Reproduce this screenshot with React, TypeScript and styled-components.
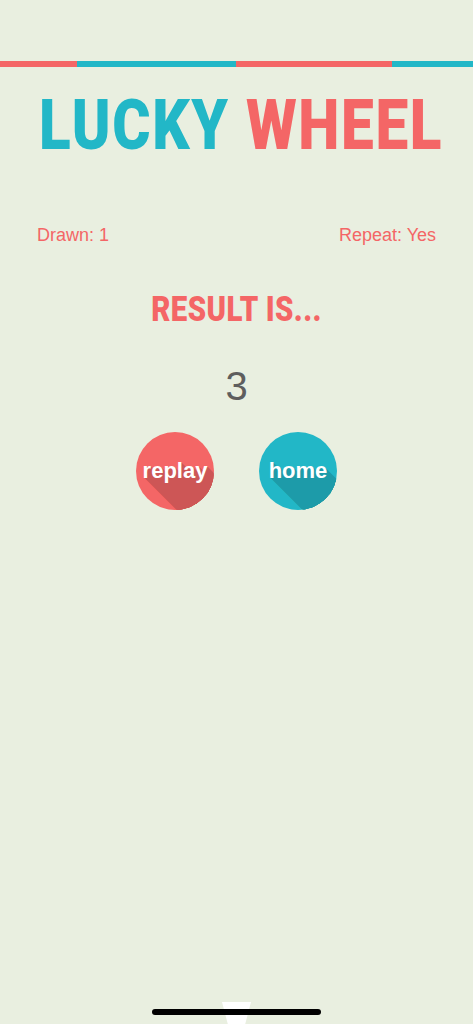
import React from "react";
import styled, { createGlobalStyle } from "styled-components";

const RED = "#f46666";
const TEAL = "#22b7c7";
const BG = "#e9efe0";

const Global = createGlobalStyle`
  html, body {
    margin: 0;
    padding: 0;
    background: ${BG};
  }
  body {
    font-family: "Liberation Sans", Arial, sans-serif;
  }
`;

const Screen = styled.div`
  position: relative;
  min-height: 1024px;
  display: flex;
  flex-direction: column;
  align-items: stretch;
  overflow: hidden;
`;

const StripeBar = styled.div`
  margin-top: 61px;
  height: 6px;
  display: flex;
`;

const Stripe = styled.div<{ $color: string; $width: number }>`
  flex: 0 0 ${(p) => p.$width}px;
  background: ${(p) => p.$color};
`;

const Title = styled.h1`
  margin: 22px 0 0;
  padding-right: 9px;
  text-align: center;
  font-family: Roboto, "Liberation Sans", sans-serif;
  font-weight: 900;
  font-size: 70px;
  line-height: 72px;
  letter-spacing: 2px;
  transform: scaleX(0.835);
  white-space: nowrap;
`;

const Word = styled.span<{ $color: string }>`
  color: ${(p) => p.$color};
`;

const StatsRow = styled.div`
  margin-top: 63px;
  padding: 0 37px 0 37px;
  display: flex;
  justify-content: space-between;
  font-size: 18px;
  line-height: 22px;
  color: ${RED};
`;

const Heading = styled.h2`
  margin: 44px 0 0;
  text-align: center;
  font-family: Roboto, "Liberation Sans", sans-serif;
  font-weight: 900;
  font-size: 35px;
  line-height: 40px;
  letter-spacing: 0.5px;
  color: ${RED};
  transform: scaleX(0.84);
`;

const ResultValue = styled.div`
  margin-top: 33px;
  text-align: center;
  font-size: 40px;
  line-height: 46px;
  color: #5e5e5e;
`;

const ButtonRow = styled.div`
  margin-top: 23px;
  display: flex;
  justify-content: center;
  gap: 45px;
`;

const longShadow = (color: string) =>
  Array.from({ length: 70 }, (_, i) => `${i + 1}px ${i + 1}px 0 ${color}`).join(", ");

const RoundButton = styled.button<{ $bg: string; $shade: string }>`
  width: 78px;
  height: 78px;
  border-radius: 50%;
  border: none;
  padding: 0;
  overflow: hidden;
  background: ${(p) => p.$bg};
  color: #fff;
  font-family: "Liberation Sans", Arial, sans-serif;
  font-weight: 700;
  font-size: 22px;
  line-height: 78px;
  text-align: center;
  text-shadow: ${(p) => longShadow(p.$shade)};
  cursor: pointer;
`;

const Pointer = styled.div`
  position: absolute;
  left: 222px;
  bottom: 0;
  width: 29px;
  height: 22px;
  background: #fff;
  clip-path: polygon(0 0, 100% 0, 80% 100%, 20% 100%);
`;

const HomeIndicator = styled.div`
  position: absolute;
  left: 152px;
  bottom: 9px;
  width: 169px;
  height: 6px;
  border-radius: 3px;
  background: #000;
`;

export default function App() {
  return (
    <>
      <Global />
      <Screen>
        <StripeBar>
          <Stripe $color={RED} $width={77} />
          <Stripe $color={TEAL} $width={159} />
          <Stripe $color={RED} $width={156} />
          <Stripe $color={TEAL} $width={81} />
        </StripeBar>
        <Title>
          <Word $color={TEAL}>LUCKY</Word> <Word $color={RED}>WHEEL</Word>
        </Title>
        <StatsRow>
          <span>Drawn: 1</span>
          <span>Repeat: Yes</span>
        </StatsRow>
        <Heading>RESULT IS...</Heading>
        <ResultValue>3</ResultValue>
        <ButtonRow>
          <RoundButton $bg={RED} $shade="#cd5656">replay</RoundButton>
          <RoundButton $bg={TEAL} $shade="#1d9ba9">home</RoundButton>
        </ButtonRow>
        <Pointer />
        <HomeIndicator />
      </Screen>
    </>
  );
}
